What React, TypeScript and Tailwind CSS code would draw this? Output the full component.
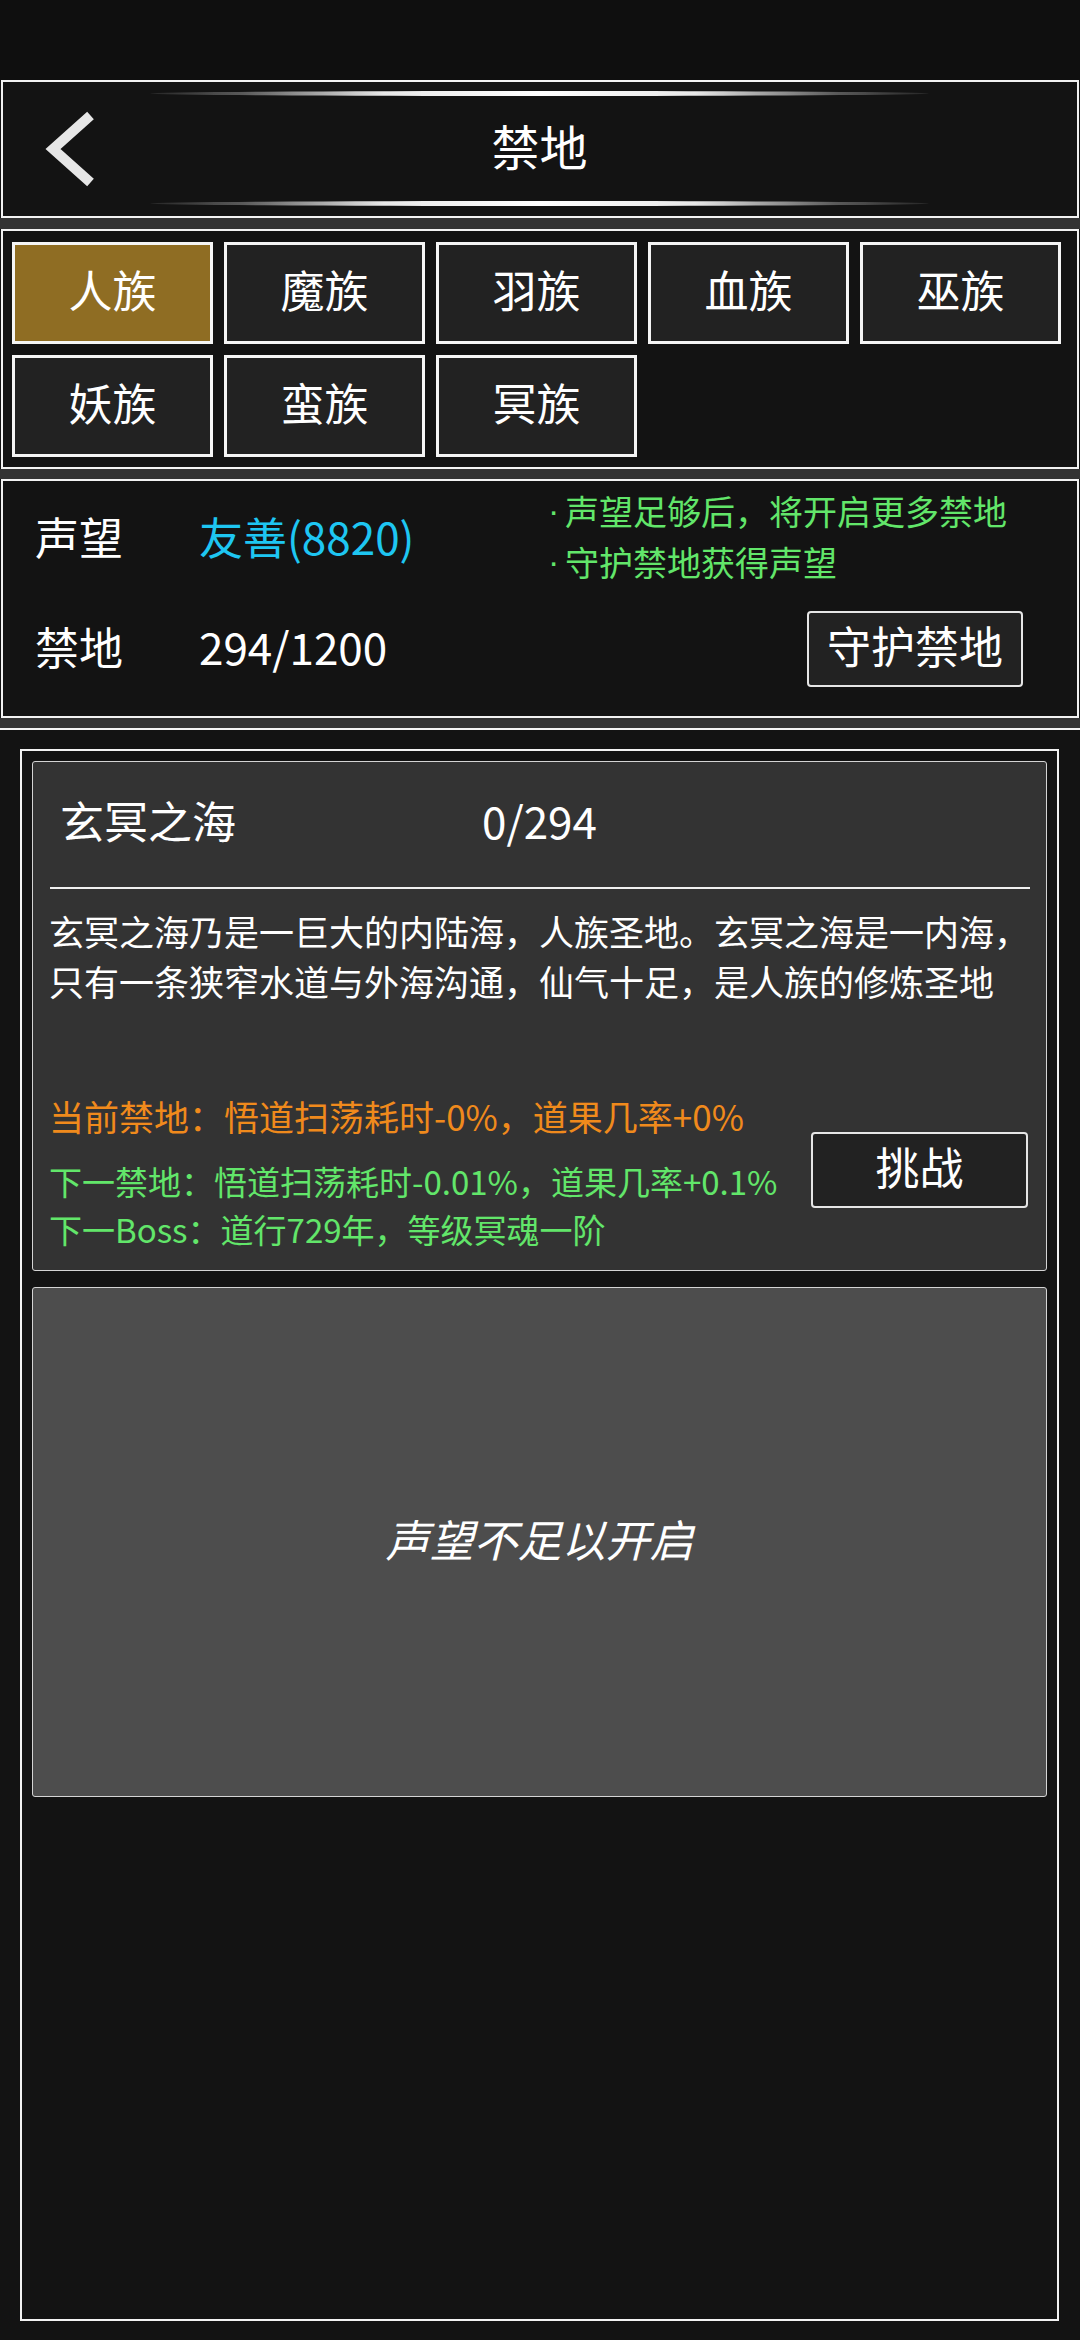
import React from "react";

const tribes = ["人族", "魔族", "羽族", "血族", "巫族", "妖族", "蛮族", "冥族"];

function GlowLine() {
  return (
    <div className="h-[5px] w-full rounded-[50%] bg-[linear-gradient(90deg,#262626_0%,#5a5a5a_12%,#e8e8e8_30%,#ffffff_50%,#e8e8e8_70%,#5a5a5a_88%,#262626_100%)]" />
  );
}

function Header() {
  return (
    <div className="mx-px flex h-[138px] shrink-0 border-2 border-[#f2f2f2] bg-[#131313]">
      <div className="flex w-[147px] items-center">
        <svg width="60" height="80" viewBox="0 0 60 80" className="ml-[40px]">
          <polyline
            points="47.5,6.5 10,40 47.5,73.5"
            fill="none"
            stroke="#e6e6e6"
            strokeWidth="10"
            strokeLinejoin="miter"
            strokeLinecap="butt"
          />
        </svg>
      </div>
      <div className="flex w-[779px] flex-col pt-[9px] pb-[10px]">
        <GlowLine />
        <div className="flex flex-1 items-center justify-center pb-[8px] text-[48px] leading-none text-white">禁地</div>
        <GlowLine />
      </div>
    </div>
  );
}

function Strip({ h }: { h: string }) {
  return <div className={`${h} shrink-0 bg-[#333333]`} />;
}

function Tabs() {
  return (
    <div className="mx-px h-[240px] shrink-0 border-2 border-[#f2f2f2] bg-[#131313] pt-[11px] pl-[9px]">
      <div className="grid grid-cols-[repeat(5,201px)] auto-rows-[102px] gap-[11px]">
        {tribes.map((t, i) => (
          <div
            key={t}
            className={
              i === 0
                ? "flex items-center justify-center border-[3px] border-[#f5f5f5] bg-[#8f6d23] pb-[9px] text-[44px] leading-none text-white"
                : "flex items-center justify-center border-[3px] border-[#f5f5f5] bg-[#222222] pb-[9px] text-[44px] leading-none text-white"
            }
          >
            {t}
          </div>
        ))}
      </div>
    </div>
  );
}

function Info() {
  return (
    <div className="mx-px flex h-[239px] shrink-0 flex-col border-2 border-[#f2f2f2] bg-[#131313] pl-[32px] pr-[54px]">
      <div className="flex h-[118px] items-center pb-[8px]">
        <div className="w-[164px] text-[44px] leading-none text-white">声望</div>
        <div className="w-[349px] text-[44px] leading-none text-[#1ec6f2]">友善(8820)</div>
        <div className="text-[34px] leading-[51px] text-[#62e66a] whitespace-nowrap">
          <div className="flex">
            <span className="w-[17px] font-['Liberation_Sans',sans-serif]">·</span>
            <span>声望足够后，将开启更多禁地</span>
          </div>
          <div className="flex">
            <span className="w-[17px] font-['Liberation_Sans',sans-serif]">·</span>
            <span>守护禁地获得声望</span>
          </div>
        </div>
      </div>
      <div className="flex h-[102px] items-center pb-[2px]">
        <div className="w-[164px] pb-[7px] text-[44px] leading-none text-white">禁地</div>
        <div className="pb-[7px] text-[44px] leading-none text-white">294/1200</div>
        <button className="ml-auto flex h-[76px] w-[216px] items-center justify-center rounded-[4px] border-2 border-[#e6e6e6] bg-[#222222] pb-[8px] text-[44px] leading-none text-white">
          守护禁地
        </button>
      </div>
    </div>
  );
}

function RealmCard() {
  return (
    <div className="flex h-[510px] shrink-0 flex-col rounded-[3px] border border-[#d4d4d4] bg-[#333333]">
      <div className="flex h-[125px] items-center pb-[9px] pl-[27px]">
        <div className="w-[422px] text-[44px] leading-none text-white">玄冥之海</div>
        <div className="text-[44px] leading-none text-white">0/294</div>
      </div>
      <div className="ml-[17px] mr-[16px] h-[2px] bg-[#f0f0f0]" />
      <div className="mt-[17px] px-[16px] text-[35px] leading-[50px] text-white whitespace-nowrap">
        <div>玄冥之海乃是一巨大的内陆海，人族圣地。玄冥之海是一内海，</div>
        <div>只有一条狭窄水道与外海沟通，仙气十足，是人族的修炼圣地</div>
      </div>
      <div className="mt-[85px] flex pl-[16px] pr-[18px]">
        <div className="flex flex-col whitespace-nowrap">
          <div className="text-[35px] leading-[50px] text-[#f08a1c]">当前禁地：悟道扫荡耗时-0%，道果几率+0%</div>
          <div className="mt-[16px] text-[33px] leading-[48px] text-[#62e66a]">下一禁地：悟道扫荡耗时-0.01%，道果几率+0.1%</div>
          <div className="text-[33px] leading-[48px] text-[#62e66a]">下一Boss：道行729年，等级冥魂一阶</div>
        </div>
        <button className="ml-auto mt-[41px] flex h-[76px] w-[217px] items-center justify-center rounded-[4px] border-2 border-[#e6e6e6] bg-[#222222] pb-[8px] text-[44px] leading-none text-white">
          挑战
        </button>
      </div>
    </div>
  );
}

function LockedCard() {
  return (
    <div className="flex h-[510px] shrink-0 items-center justify-center rounded-[3px] border border-[#d4d4d4] bg-[#4d4d4d] pb-[9px]">
      <span className="text-[44px] italic leading-none text-white">声望不足以开启</span>
    </div>
  );
}

export default function App() {
  return (
    <div className="flex h-[2340px] w-[1080px] flex-col overflow-hidden bg-[#131313] font-['Noto_Sans_CJK_SC',sans-serif] text-white">
      <div className="h-[80px] shrink-0 bg-[#0f0f0f]" />
      <Header />
      <Strip h="h-[11px]" />
      <Tabs />
      <Strip h="h-[10px]" />
      <Info />
      <Strip h="h-[10px]" />
      <div className="flex flex-1 flex-col border-t-2 border-[#f2f2f2] bg-[#131313] pt-[19px] pb-[19px] pl-[20px] pr-[21px]">
        <div className="flex flex-1 flex-col gap-[16px] border-2 border-[#f2f2f2] p-[10px]">
          <RealmCard />
          <LockedCard />
        </div>
      </div>
    </div>
  );
}
